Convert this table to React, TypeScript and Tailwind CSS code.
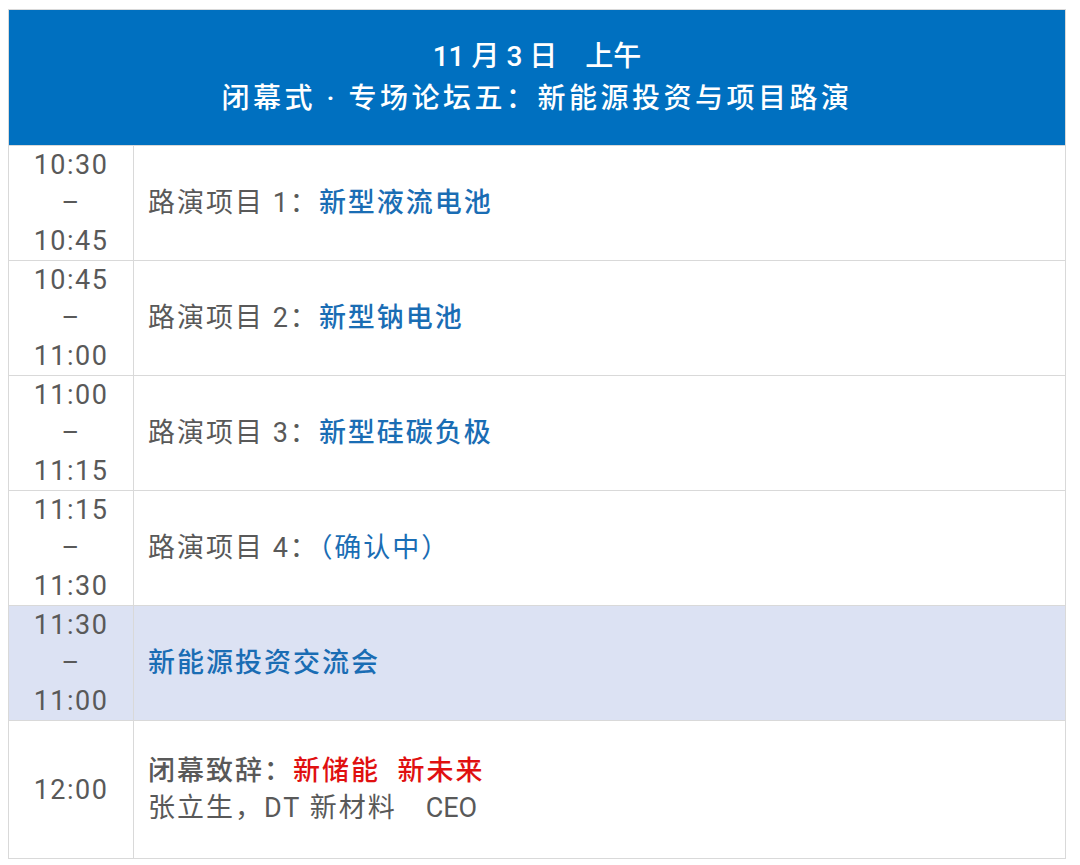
import React from "react";

const FONT = { fontFamily: '"Roboto", "Noto Sans CJK SC", sans-serif' };

function TimeCell({ lines }: { lines: string[] }) {
  return (
    <div className="flex w-[125px] shrink-0 flex-col items-center justify-center border-r border-[#d9d9d9] text-[27px] leading-[38px] tracking-[1.5px] text-[#595959]">
      {lines.map((l, i) => (
        <div key={i}>{l}</div>
      ))}
    </div>
  );
}

function Row({
  times,
  children,
  highlight,
  tall,
}: {
  times: string[];
  children: React.ReactNode;
  highlight?: boolean;
  tall?: boolean;
}) {
  return (
    <div
      className={`flex border-t border-[#d9d9d9] ${tall ? "h-[138px]" : "h-[115px]"} ${
        highlight ? "bg-[#dce2f3]" : "bg-white"
      }`}
    >
      <TimeCell lines={times} />
      <div className="flex flex-1 flex-col justify-center pl-[14px] text-[27px] leading-[37px] tracking-[2px] text-[#595959]">
        {children}
      </div>
    </div>
  );
}

export default function App() {
  return (
    <div className="min-h-[865px] w-[1080px] bg-white pl-[8px] pt-[9px]" style={FONT}>
      <div className="w-[1058px] border border-[#d9d9d9]">
        <div className="flex h-[135px] flex-col items-center justify-center bg-[#0070c0] text-[28px] font-medium leading-[42px] text-white">
          <div className="tracking-[0px]">11 月 3 日　上午</div>
          <div className="tracking-[3.5px]">闭幕式 · 专场论坛五：新能源投资与项目路演</div>
        </div>
        <Row times={["10:30", "–", "10:45"]}>
          <div>
            路演项目 1：<span className="font-medium text-[#1a6db4]">新型液流电池</span>
          </div>
        </Row>
        <Row times={["10:45", "–", "11:00"]}>
          <div>
            路演项目 2：<span className="font-medium text-[#1a6db4]">新型钠电池</span>
          </div>
        </Row>
        <Row times={["11:00", "–", "11:15"]}>
          <div>
            路演项目 3：<span className="font-medium text-[#1a6db4]">新型硅碳负极</span>
          </div>
        </Row>
        <Row times={["11:15", "–", "11:30"]}>
          <div>
            路演项目 4：<span className="text-[#1a6db4]">（确认中）</span>
          </div>
        </Row>
        <Row times={["11:30", "–", "11:00"]} highlight>
          <div className="font-medium text-[#1a6db4]">新能源投资交流会</div>
        </Row>
        <Row times={["12:00"]} tall>
          <div className="font-medium">
            闭幕致辞：<span className="text-[#e01010]">新储能{"\u00a0\u00a0"}新未来</span>
          </div>
          <div>
            张立生，DT 新材料　<span className="tracking-[0px]">CEO</span>
          </div>
        </Row>
      </div>
    </div>
  );
}
